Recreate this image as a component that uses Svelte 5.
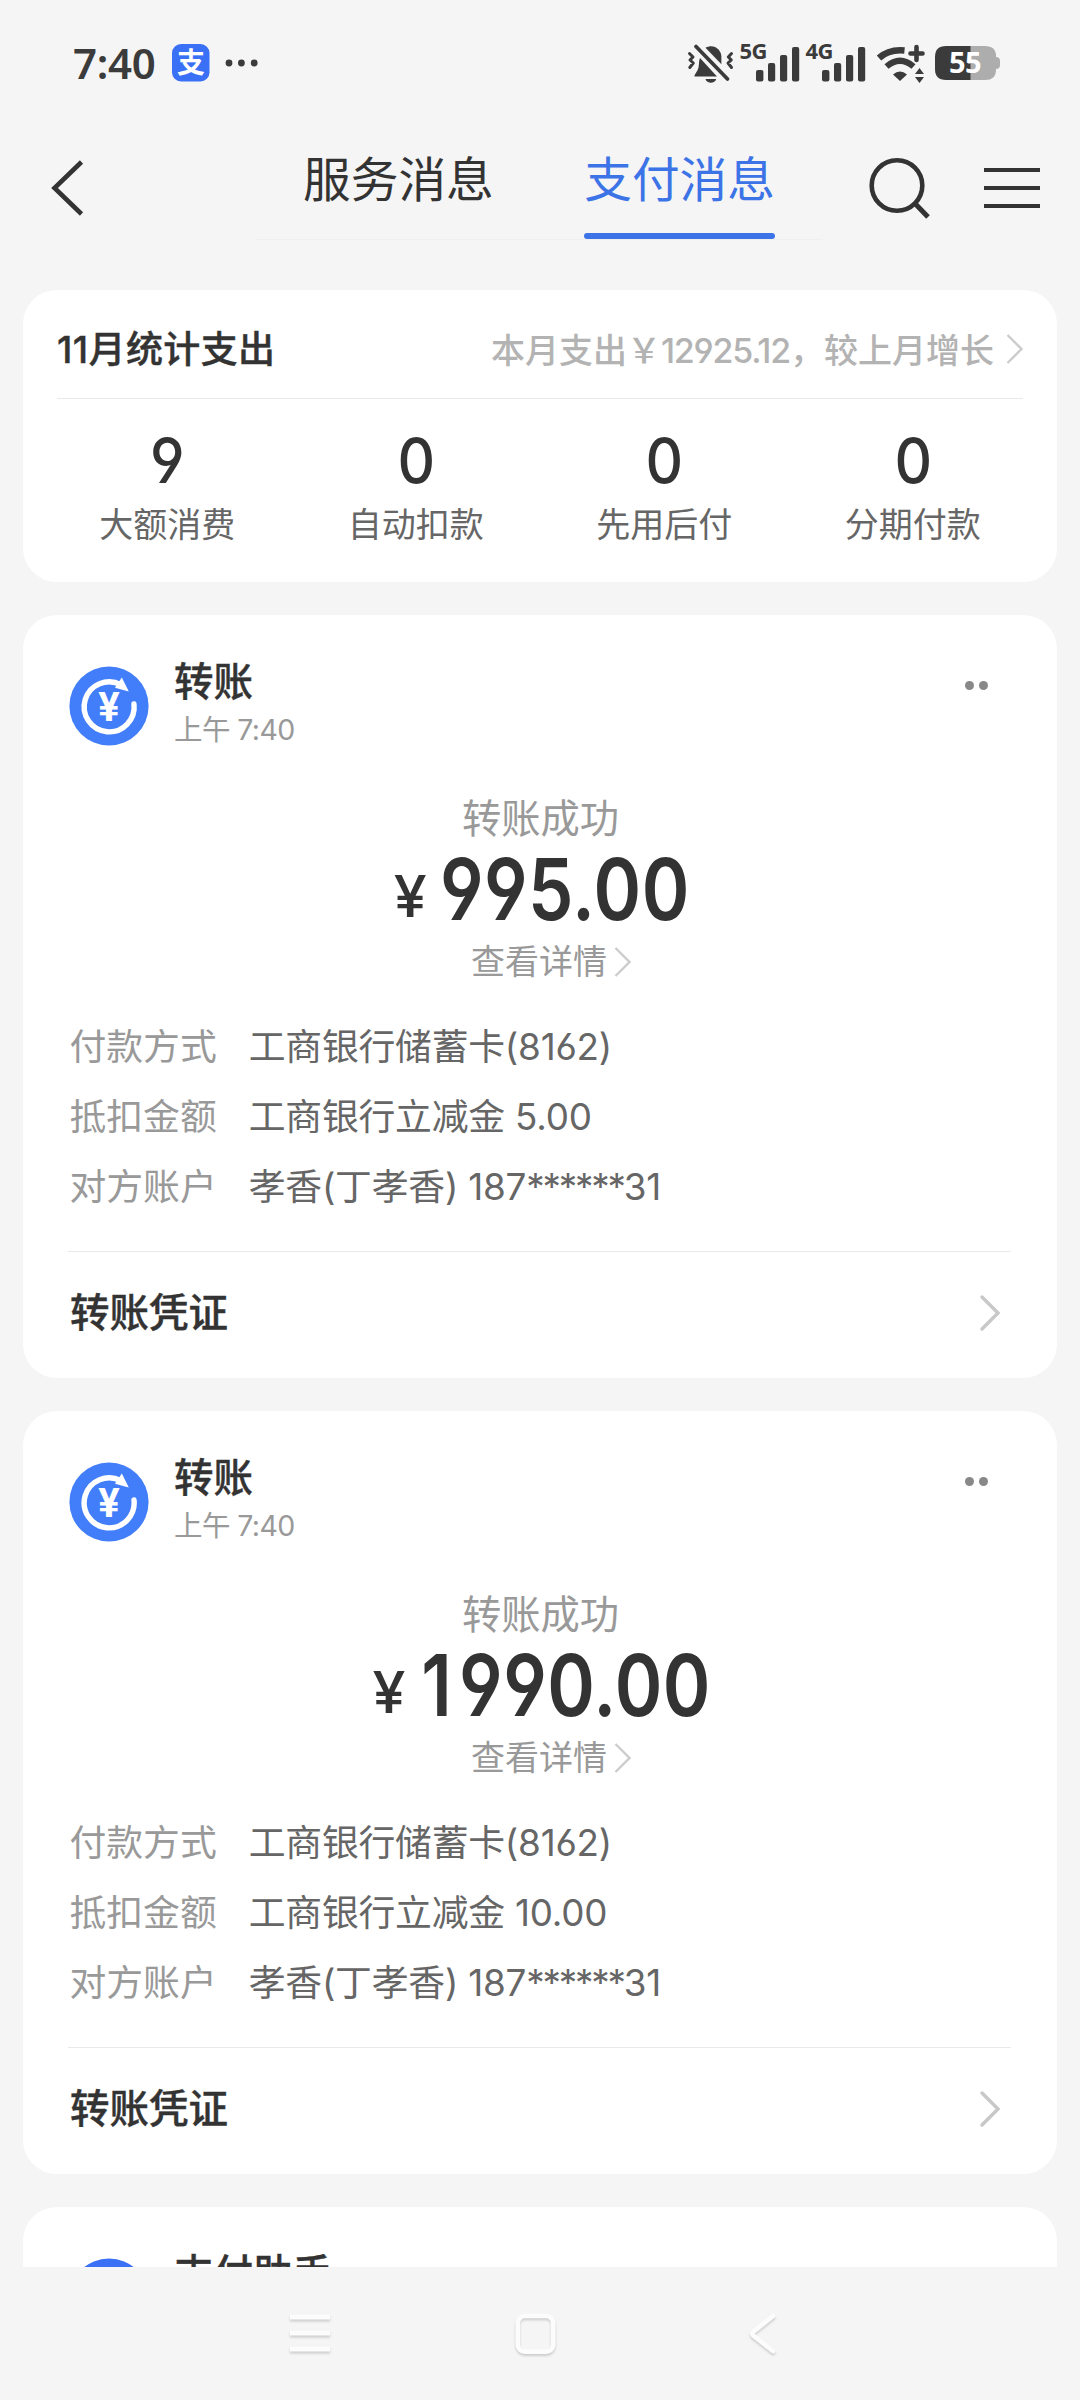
<script>
  const tabs = [
    { name: '服务消息', active: false },
    { name: '支付消息', active: true }
  ];

  const stats = [
    { count: 9, label: '大额消费' },
    { count: 0, label: '自动扣款' },
    { count: 0, label: '先用后付' },
    { count: 0, label: '分期付款' }
  ];

  const messages = [
    {
      title: '转账',
      time: '上午 7:40',
      status: '转账成功',
      amount: '995.00',
      rows: [
        { label: '付款方式', value: '工商银行储蓄卡(8162)' },
        { label: '抵扣金额', value: '工商银行立减金 5.00' },
        { label: '对方账户', value: '孝香(丁孝香) 187', mask: '******', end: '31' }
      ]
    },
    {
      title: '转账',
      time: '上午 7:40',
      status: '转账成功',
      amount: '1990.00',
      rows: [
        { label: '付款方式', value: '工商银行储蓄卡(8162)' },
        { label: '抵扣金额', value: '工商银行立减金 10.00' },
        { label: '对方账户', value: '孝香(丁孝香) 187', mask: '******', end: '31' }
      ]
    }
  ];
</script>

{#snippet signal(name)}
  <svg class="signal" width="59" height="40" viewBox="0 0 59 40">
    <text x="-1.5" y="16">{name}</text>
    <rect x="15" y="27" width="7.4" height="11.5" rx="2" />
    <rect x="27" y="20" width="7.2" height="18.5" rx="2" />
    <rect x="39" y="12" width="7.2" height="26.5" rx="2" />
    <rect x="51" y="4" width="7.2" height="34.5" rx="2" />
  </svg>
{/snippet}

<div class="phone">
  <div class="status-bar">
    <span class="clock">7:40</span>
    <svg class="app-logo" width="38" height="38" viewBox="0 0 38 38">
      <rect width="37.5" height="37.5" rx="9" fill="#3a70f5" />
      <text x="5" y="28.5">支</text>
    </svg>
    <svg class="dots" width="34" height="10" viewBox="0 0 34 10">
      <circle cx="4" cy="5" r="3.4" />
      <circle cx="16.4" cy="5" r="3.4" />
      <circle cx="29.2" cy="5" r="3.4" />
    </svg>

    <div class="status-icons">
      <svg width="46" height="40" viewBox="0 0 46 40">
        <path d="M12 15 L29 33.5 H6.5 C6 31.5 9.5 29 10.5 24.5 C11.3 20.5 10.6 18 12 15Z" />
        <path d="M17.5 4.8 C25 0.5 33 5.5 33.4 13.5 V21.3 Z" />
        <path d="M17.5 36 H28.2 C27 41 18.7 41 17.5 36Z" />
        <path d="M8 3.5 L39.5 36" fill="none" stroke="#3b3b3b" stroke-width="3.8" stroke-linecap="round" />
        <path d="M1.5 10.5 L5 14 L2 17 L5.3 20 L1.8 24.5 M43.5 10.5 L40.3 14 L43.3 17 L40 20 L43.5 24.5" fill="none" stroke="#3b3b3b" stroke-width="3" stroke-linejoin="round" stroke-linecap="round" />
      </svg>
      {@render signal('5G')}
      {@render signal('4G')}
      <svg class="wifi" width="49" height="40" viewBox="0 0 49 40">
        <path d="M2 15 Q12 6 27.5 7.5" fill="none" stroke="#3b3b3b" stroke-width="6.6" />
        <path d="M9.5 23.5 Q23 12 36.5 23.5" fill="none" stroke="#3b3b3b" stroke-width="6.2" />
        <path d="M16 31.5 Q23 25.5 30 31.5 L23 38Z" />
        <path d="M39.5 4 V17 M33.5 10.5 H45.5" fill="none" stroke="#3b3b3b" stroke-width="4.6" stroke-linecap="round" />
        <path d="M38 31 L42.5 25 L47 31Z M38 34 L42.5 40 L47 34Z" />
      </svg>
      <svg class="battery" width="66" height="36" viewBox="0 0 66 36">
        <path d="M35 1 H50 Q61 1 61 11 V12 Q65 12 65 16 V20 Q65 24 61 24 V25 Q61 35 50 35 H35Z" fill="#adadad" />
        <path d="M35.5 1 H11 Q0 1 0 12 V24 Q0 35 11 35 H35.5Z" />
        <text x="14" y="28">55</text>
      </svg>
    </div>
  </div>

  <header>
    <svg class="back" width="36" height="56" viewBox="0 0 36 56">
      <path d="M32.500 2 L5.500 28 L32.500 54" fill="none" stroke="#333" stroke-width="4.6" />
    </svg>
    <nav class="tabs">
      {#each tabs as tab}
        <span class="tab" class:active={tab.active}>{tab.name}</span>
      {/each}
    </nav>
    <svg class="search" width="64" height="64" viewBox="0 0 64 64">
      <g fill="none" stroke="#333" stroke-width="4.6">
        <circle cx="29" cy="29.5" r="25.3" />
        <path d="M47 47.5 L60 61" stroke-width="5" />
      </g>
    </svg>
    <svg width="56" height="42" viewBox="0 0 56 42">
      <path d="M0 3 H56 M0 21 H56 M0 39 H56" stroke="#333" stroke-width="4.2" />
    </svg>
  </header>

  <main>
    <section class="card summary">
      <div class="summary-head">
        <h2>11月统计支出</h2>
        <span class="trend">本月支出￥<span class="sum">12925.12</span>，较上月增长</span>
        <svg width="18" height="30" viewBox="0 0 18 30">
          <path d="M2.5 1 L16.5 15 L2.5 29" fill="none" stroke="#ccc" stroke-width="2.4" />
        </svg>
      </div>
      <div class="stats">
        {#each stats as stat}
          <div class="stat">
            <strong>{stat.count}</strong>
            <span>{stat.label}</span>
          </div>
        {/each}
      </div>
    </section>

    {#each messages as message}
      <section class="card message">
        <div class="message-head">
          <svg class="avatar" width="80" height="80" viewBox="0 0 80 80">
            <circle cx="40" cy="40" r="39.6" fill="#437efa" />
            <path d="M52 18.8 A25 25 0 1 0 65 38" fill="none" stroke="#fff" stroke-width="5.4" stroke-linecap="round" />
            <path d="M52.8 11.5 L59.8 25.6 L46 21.8Z" fill="#fff" />
            <text x="40" y="55" text-anchor="middle">¥</text>
          </svg>
          <div class="who">
            <h3>{message.title}</h3>
            <time>{message.time}</time>
          </div>
          <div class="more"><i></i><i></i></div>
        </div>

        <div class="result">{message.status}</div>
        <div class="amount">
          <span class="yen">¥</span>
          <span class="digits">{#each message.amount as digit}<span class:one={digit === '1'}>{digit}</span>{/each}</span>
        </div>
        <div class="detail">
          查看详情
          <svg width="18" height="30" viewBox="0 0 18 30">
            <path d="M1.5 1 L15.5 15 L1.5 29" fill="none" stroke="#ccc" stroke-width="2.4" />
          </svg>
        </div>

        <dl>
          {#each message.rows as row}
            <div class="row">
              <dt>{row.label}</dt>
              <dd>{row.value}{#if row.mask}<span class="mask">{row.mask}</span>{row.end}{/if}</dd>
            </div>
          {/each}
        </dl>

        <div class="voucher">
          <span>转账凭证</span>
          <svg width="21" height="36" viewBox="0 0 21 36">
            <path d="M2 2 L18 18 L2 34" fill="none" stroke="#c8c8c8" stroke-width="3.4" stroke-linecap="round" />
          </svg>
        </div>
      </section>
    {/each}

    <section class="card message">
      <div class="message-head">
        <svg class="avatar" width="80" height="80" viewBox="0 0 80 80">
          <circle cx="40" cy="40" r="39.6" fill="#3a70f5" />
        </svg>
        <div class="who">
          <h3>支付助手</h3>
        </div>
      </div>
    </section>
  </main>

  <footer>
    <svg width="48" height="48" viewBox="0 0 48 48">
      <path d="M4 7 H44 M4 23 H44 M4 39 H44" stroke-width="5" />
    </svg>
    <svg width="48" height="48" viewBox="0 0 48 48">
      <rect x="6.8" y="6" width="35.4" height="35.6" rx="7" />
    </svg>
    <svg width="48" height="48" viewBox="0 0 48 48">
      <path d="M37 6 L17 22 Q15.5 23.5 17 25.3 L37 41" stroke-linecap="round" />
    </svg>
  </footer>
</div>

<style>
  :global(body) {
    background: #f5f5f5;
  }

  .phone,
  .phone * {
    box-sizing: border-box;
  }

  .phone {
    width: 1080px;
    height: 2400px;
    display: flex;
    flex-direction: column;
    overflow: hidden;
    background: #f5f5f5;
    color: #333;
    font-family: Inter, "Noto Sans CJK SC", sans-serif;
    font-feature-settings: "cv03", "cv04";
  }

  svg {
    display: block;
    flex-shrink: 0;
    overflow: visible;
  }

  h2,
  h3,
  dl,
  dd {
    margin: 0;
  }

  .status-bar {
    height: 126px;
    flex-shrink: 0;
    display: flex;
    align-items: center;
    padding: 0 79px 0 73px;
    fill: #3b3b3b;
  }

  .clock {
    width: 99px;
    color: #3b3b3b;
    font-family: "Noto Sans", sans-serif;
    font-size: 42px;
    font-weight: 600;
    letter-spacing: -0.3px;
    line-height: 60px;
  }

  .app-logo text {
    fill: #fff;
    font-size: 28px;
    font-weight: 700;
  }

  .dots {
    margin-left: 15px;
  }

  .status-icons {
    display: flex;
    align-items: center;
    margin-left: auto;
  }

  .signal {
    margin-left: 7px;
  }

  .signal text {
    font-family: "Noto Sans", sans-serif;
    font-size: 22px;
    font-weight: 700;
    letter-spacing: -0.5px;
  }

  .wifi {
    margin-left: 11px;
  }

  .battery {
    margin-left: 9px;
  }

  .battery text {
    fill: #fff;
    font-family: "Noto Sans", sans-serif;
    font-size: 29px;
    font-weight: 700;
    letter-spacing: -0.5px;
  }

  header {
    height: 124px;
    flex-shrink: 0;
    display: flex;
    align-items: center;
    padding: 5px 39px 5px 49px;
  }

  .tabs {
    display: flex;
    justify-content: space-between;
    align-self: flex-start;
    width: 566px;
    height: 109px;
    margin-left: 171px;
    padding: 0 47px 0 47px;
    border-bottom: 1px solid #efefef;
  }

  .tab {
    height: 108px;
    font-size: 47.7px;
    line-height: 98px;
  }

  .tab.active {
    position: relative;
    color: #3c73e6;
  }

  .tab.active::after {
    content: "";
    position: absolute;
    left: 0;
    right: 0;
    bottom: 0;
    height: 6px;
    border-radius: 3px;
    background: #3c73e6;
  }

  .search {
    margin-left: 46px;
    margin-right: 52px;
  }

  main {
    height: 1977px;
    flex-shrink: 0;
    display: flex;
    flex-direction: column;
    gap: 33px;
    padding: 0 23px;
    margin-top: 40px;
    overflow: hidden;
  }

  .card {
    flex-shrink: 0;
    background: #fff;
    border-radius: 34px;
  }

  .summary {
    height: 292px;
  }

  .summary-head {
    height: 109px;
    display: flex;
    align-items: center;
    margin: 0 34px;
    padding-top: 9px;
    border-bottom: 1px solid #e9e9e9;
  }

  h2 {
    padding-bottom: 4px;
    font-size: 37px;
    font-weight: 500;
    letter-spacing: 0.4px;
    -webkit-text-stroke: 0.4px #333;
  }

  .trend {
    margin-left: auto;
    margin-right: 11px;
    color: #b3b3b3;
    font-size: 34px;
    font-weight: 500;
    white-space: nowrap;
  }

  .sum {
    letter-spacing: -1.2px;
  }

  .stats {
    display: grid;
    grid-template-columns: repeat(4, 1fr);
    padding: 31px 20px 0;
    text-align: center;
  }

  .stat strong,
  .stat span {
    display: block;
  }

  .stat strong {
    font-size: 62px;
    font-weight: 550;
    line-height: 62px;
    transform: scaleX(0.94);
  }

  .stat span {
    color: #666;
    font-size: 34px;
    line-height: 44px;
    margin-top: 11px;
  }

  .message {
    padding: 43px 46px 0 47px;
  }

  .message-head {
    display: flex;
    height: 92px;
  }

  .avatar {
    margin-top: 8px;
    margin-left: -1px;
  }

  .avatar text {
    fill: #fff;
    font-family: Roboto, sans-serif;
    font-size: 40px;
    font-weight: 700;
  }

  .who {
    margin-left: 25px;
  }

  h3 {
    font-size: 39.5px;
    font-weight: 500;
    line-height: 48px;
    -webkit-text-stroke: 0.4px #333;
  }

  time {
    display: block;
    margin-top: 4px;
    color: #999;
    font-size: 28.5px;
    letter-spacing: -0.6px;
    line-height: 40px;
  }

  .more {
    display: flex;
    gap: 5px;
    margin: 23px 23px 0 auto;
  }

  .more i {
    width: 9px;
    height: 9px;
    border-radius: 50%;
    background: #888;
  }

  .result {
    margin-top: 41px;
    color: #999;
    font-size: 39.3px;
    line-height: 56px;
    text-align: center;
  }

  .amount {
    display: flex;
    justify-content: center;
    align-items: baseline;
    height: 80px;
    margin-top: 3px;
    padding-left: 6px;
    transform: scaleX(0.85);
  }

  .yen {
    margin-right: 19px;
    font-size: 58px;
    font-weight: 500;
    line-height: 40px;
    transform: translateY(-3px) scaleX(1.2);
  }

  .digits {
    font-size: 85px;
    font-weight: 600;
    letter-spacing: 0.5px;
    line-height: 80px;
  }

  .one {
    margin-left: 3px;
    margin-right: 8px;
  }

  .detail {
    display: flex;
    justify-content: center;
    align-items: center;
    gap: 7px;
    margin-top: 10px;
    padding-left: 22px;
    color: #999;
    font-size: 34px;
    line-height: 44px;
  }

  dl {
    padding: 28px 0 29px;
  }

  .row {
    display: flex;
    gap: 32px;
    margin-left: -0.5px;
    font-size: 36.8px;
    line-height: 70px;
  }

  dt {
    color: #999;
  }

  dd {
    color: #666;
    letter-spacing: -0.2px;
  }

  .mask {
    letter-spacing: -2.2px;
  }

  .voucher {
    height: 127px;
    display: flex;
    justify-content: space-between;
    align-items: center;
    margin-left: -2px;
    padding: 0 10px 4px 2px;
    border-top: 1px solid #e9e9e9;
    font-size: 39.5px;
    font-weight: 500;
    -webkit-text-stroke: 0.4px #333;
  }

  .voucher span {
    padding-bottom: 7px;
  }

  footer {
    flex: 1;
    display: flex;
    gap: 177px;
    padding: 43px 0 0 286px;
  }

  footer svg {
    fill: none;
    stroke: #fcfcfc;
    stroke-width: 4.6;
    filter: drop-shadow(0 2px 1px rgba(0, 0, 0, 0.16));
  }
</style>
